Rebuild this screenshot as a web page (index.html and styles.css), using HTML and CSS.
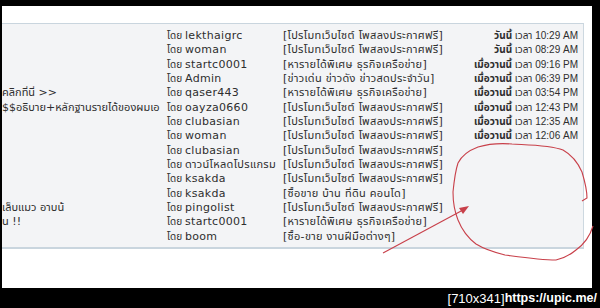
FILE: index.html
```html
<!DOCTYPE html>
<html lang="th">
<head>
<meta charset="utf-8">
<title>upic</title>
<link rel="stylesheet" href="styles.css">
</head>
<body>
<div class="shot">
  <div class="page">
    <div class="head-space"></div>
    <div class="board">
      <div class="row"><span class="title"></span><span class="by">โดย</span><span class="user">lekthaigrc</span><span class="cat">[โปรโมทเว็บไซต์ โพสลงประกาศฟรี]</span><span class="when"><b>วันนี้</b> เวลา 10:29 AM</span></div>
      <div class="row"><span class="title"></span><span class="by">โดย</span><span class="user">woman</span><span class="cat">[โปรโมทเว็บไซต์ โพสลงประกาศฟรี]</span><span class="when"><b>วันนี้</b> เวลา 08:29 AM</span></div>
      <div class="row"><span class="title"></span><span class="by">โดย</span><span class="user">startc0001</span><span class="cat">[หารายได้พิเศษ ธุรกิจเครือข่าย]</span><span class="when"><b>เมื่อวานนี้</b> เวลา 09:16 PM</span></div>
      <div class="row"><span class="title"></span><span class="by">โดย</span><span class="user">Admin</span><span class="cat">[ข่าวเด่น ข่าวดัง ข่าวสดประจำวัน]</span><span class="when"><b>เมื่อวานนี้</b> เวลา 06:39 PM</span></div>
      <div class="row"><span class="title">คลิกที่นี่ &gt;&gt;</span><span class="by">โดย</span><span class="user">qaser443</span><span class="cat">[หารายได้พิเศษ ธุรกิจเครือข่าย]</span><span class="when"><b>เมื่อวานนี้</b> เวลา 03:54 PM</span></div>
      <div class="row"><span class="title">$$อธิบาย+หลักฐานรายได้ของผมเอ</span><span class="by">โดย</span><span class="user">oayza0660</span><span class="cat">[โปรโมทเว็บไซต์ โพสลงประกาศฟรี]</span><span class="when"><b>เมื่อวานนี้</b> เวลา 12:43 PM</span></div>
      <div class="row"><span class="title"></span><span class="by">โดย</span><span class="user">clubasian</span><span class="cat">[โปรโมทเว็บไซต์ โพสลงประกาศฟรี]</span><span class="when"><b>เมื่อวานนี้</b> เวลา 12:35 AM</span></div>
      <div class="row"><span class="title"></span><span class="by">โดย</span><span class="user">woman</span><span class="cat">[โปรโมทเว็บไซต์ โพสลงประกาศฟรี]</span><span class="when"><b>เมื่อวานนี้</b> เวลา 12:06 AM</span></div>
      <div class="row"><span class="title"></span><span class="by">โดย</span><span class="user">clubasian</span><span class="cat">[โปรโมทเว็บไซต์ โพสลงประกาศฟรี]</span><span class="when"></span></div>
      <div class="row"><span class="title"></span><span class="by">โดย</span><span class="user">ดาวน์โหลดโปรแกรม</span><span class="cat">[โปรโมทเว็บไซต์ โพสลงประกาศฟรี]</span><span class="when"></span></div>
      <div class="row"><span class="title"></span><span class="by">โดย</span><span class="user">ksakda</span><span class="cat">[โปรโมทเว็บไซต์ โพสลงประกาศฟรี]</span><span class="when"></span></div>
      <div class="row"><span class="title"></span><span class="by">โดย</span><span class="user">ksakda</span><span class="cat">[ซื้อขาย บ้าน ที่ดิน คอนโด]</span><span class="when"></span></div>
      <div class="row"><span class="title">เล็บแมว อาบน้</span><span class="by">โดย</span><span class="user">pingolist</span><span class="cat">[โปรโมทเว็บไซต์ โพสลงประกาศฟรี]</span><span class="when"></span></div>
      <div class="row"><span class="title">น !!</span><span class="by">โดย</span><span class="user">startc0001</span><span class="cat">[หารายได้พิเศษ ธุรกิจเครือข่าย]</span><span class="when"></span></div>
      <div class="row"><span class="title"></span><span class="by">โดย</span><span class="user">boom</span><span class="cat">[ซื้อ-ขาย งานฝีมือต่างๆ]</span><span class="when"></span></div>
    </div>
    <svg class="mark" width="600" height="308" viewBox="0 0 600 308" aria-hidden="true">
      <path d="M458 163 C462 155 470 150 478 147 C488 144 500 143 512 144 C530 145 550 145 563 150 C572 155 578 163 582 172 C585 182 587 190 587 198 L582 201" fill="none" stroke="#c8404a" stroke-width="1.1"/>
      <path d="M593 226 C590 236 583 245 576 250 C570 255 565 258 556 260 C540 260 520 257 505 255 C493 252 484 249 476 244 C468 238 462 230 458 220 C454 210 453 200 453 192 C454 182 455 172 458 163" fill="none" stroke="#c8404a" stroke-width="1.1"/>
      <path d="M383 253 L463 210" fill="none" stroke="#c8404a" stroke-width="1.1"/>
      <path d="M469 206 L459 208 L463 214 Z" fill="#c8404a"/>
    </svg>
  </div>
  <div class="credit"><span class="size">[710x341]</span><span class="url">https://upic.me/</span></div>
</div>
</body>
</html>
```
FILE: styles.css
```css
html, body {
  margin: 0;
  padding: 0;
  background: #000;
}
.shot {
  width: 600px;
  height: 308px;
  padding: 6px 8px 0 2px;
  box-sizing: border-box;
  display: flex;
  flex-direction: column;
  overflow: hidden;
}
.page {
  position: relative;
  background: #fff;
  height: 282px;
  flex: none;
}
.head-space {
  height: 17px;
}
.board {
  background: #f3f4f6;
  border-top: 1px solid #c9d5de;
  border-right: 1px solid #cdd8e0;
  border-bottom: 2px solid #c9d5de;
  margin-right: 8px;
  padding: 5px 0 3px;
  font-family: "DejaVu Sans", "Noto Sans Thai", "Loma", "Tlwg Typo", sans-serif;
  font-size: 11px;
  color: #2e2e2e;
}
.row {
  display: grid;
  grid-template-columns: 165px 18px 98px 1fr auto;
  height: 14.33px;
  line-height: 14.33px;
  white-space: nowrap;
}
.title {
  overflow: hidden;
  font-size: 11px;
}
.by {
  font-size: 10px;
  overflow: visible;
}
.user {
  overflow: hidden;
  letter-spacing: 0.3px;
}
.cat {
  overflow: hidden;
  letter-spacing: 0.3px;
}
.when {
  padding-right: 5px;
  text-align: right;
  font-family: "Liberation Sans", "Noto Sans Thai", "Loma", sans-serif;
  font-size: 10px;
}
.when b {
  font-weight: bold;
}
.mark {
  position: absolute;
  left: -2px;
  top: -6px;
  pointer-events: none;
}
.credit {
  flex: 1;
  display: flex;
  justify-content: flex-end;
  align-items: center;
  color: #fff;
  margin-right: -5px;
}
.size {
  font-family: "Liberation Sans", sans-serif;
  font-size: 13px;
}
.url {
  font-family: "Liberation Sans Narrow", "Liberation Sans", sans-serif;
  font-size: 12.5px;
  font-weight: bold;
}
```
